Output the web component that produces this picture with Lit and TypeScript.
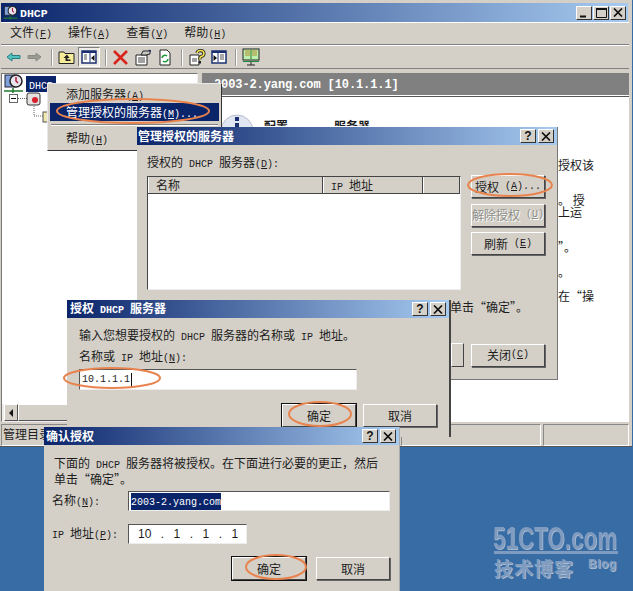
import { LitElement, html, css, svg } from "lit";
import { customElement } from "lit/decorators.js";

function t(s: string) {
  const parts = s.split(/(_.|[\x20-\x7e]+)/).filter(Boolean);
  return parts.map((p) => {
    const m = p.match(/^([\x20-\x7e]*)$/);
    if (!m) return p;
    const segs = p.split(/(_.)/).filter(Boolean);
    return html`<span class="l">${segs.map((q) => (q[0] === "_" && q.length === 2 ? html`<u>${q[1]}</u>` : q))}</span>`;
  });
}

const capBtn = (k: string) => html`<span class="cap">${k === "?"
  ? html`<b class="q">?</b>`
  : k === "x"
    ? html`<svg width="10" height="9" viewBox="0 0 10 9"><path d="M1 0.5 9 8.5M9 0.5 1 8.5" stroke="#111" stroke-width="1.7" fill="none"/></svg>`
    : k === "max"
      ? html`<svg width="11" height="10" viewBox="0 0 11 10"><path d="M.5 1.5h10v8H.5z" stroke="#111" fill="none" stroke-width="1"/><path d="M0 1h11" stroke="#111" stroke-width="2"/></svg>`
      : html`<svg width="10" height="10" viewBox="0 0 10 10"><path d="M1 8.5h6" stroke="#111" stroke-width="2"/></svg>`}</span>`;

const tool = (body: unknown, cls = "") => html`<span class="tool ${cls}"><svg width="20" height="18" viewBox="0 0 20 18">${body}</svg></span>`;

const back = svg`<path d="M4 9 9 5v2.500h8v3H9V13z" fill="#4fc3c0" stroke="#2a7d80"/>`;
const fwd = svg`<path d="M16 9 11 5v2.500H3v3h8V13z" fill="#9a9a92" stroke="#8a8a84"/>`;
const up = svg`<path d="M2 4h5l1 1.500h9v10H2z" fill="#f7ec9a" stroke="#222"/><path d="M10 6.500 6.500 10h2v3h5v-1.500h-3V10h2z" fill="#222"/>`;
const split = svg`<rect x="3" y="3" width="14" height="12" fill="#fff" stroke="#1a2f70" stroke-width="1.500"/><rect x="3" y="3" width="14" height="2" fill="#1a2f70"/><path d="M11 4v10" stroke="#1a2f70"/><path d="M5 7h3M5 9h3M5 11h3" stroke="#555"/><path d="M15.500 7v6L12 10z" fill="#111"/>`;
const splitR = svg`<rect x="3" y="3" width="14" height="12" fill="#fff" stroke="#1a2f70" stroke-width="1.500"/><rect x="3" y="3" width="14" height="2" fill="#1a2f70"/><path d="M9 4v10" stroke="#1a2f70"/><path d="M11 7h4M11 9h4M11 11h4" stroke="#555"/><path d="M4.500 7v6L8 10z" fill="#111"/>`;
const del = svg`<path d="M3 3 16 16M16 3 3 16" stroke="#d9241c" stroke-width="2.600"/>`;
const props = svg`<path d="M3 7h11v10H3z" fill="#fff" stroke="#222"/><path d="M5 10h7M5 12h7M5 14h7" stroke="#444"/><path d="M8 7 10 3h5l2-1v4l-4 1z" fill="#c8c8c8" stroke="#222"/><path d="M15 3l3-1v2z" fill="#1a2f70"/>`;
const refresh = svg`<path d="M5 2h7l3 3v12H5z" fill="#fff" stroke="#222"/><path d="M7 10a3 3 0 0 1 5-2M13 11a3 3 0 0 1-5 2" stroke="#1c9a3c" stroke-width="1.600" fill="none"/>`;
const help = svg`<path d="M3 7h9v10H3z" fill="#fff" stroke="#222"/><path d="M5 11h5M5 13h5" stroke="#444"/><path d="M10 5a3.500 3 0 1 1 4 3.500c-1 .5-1.200 1-1.200 3" stroke="#222" stroke-width="3.200" fill="none"/><path d="M10 5a3.500 3 0 1 1 4 3.500c-1 .5-1.200 1-1.200 3" stroke="#f2e64a" stroke-width="1.500" fill="none"/><rect x="11.500" y="13" width="2.500" height="2.500" fill="#222"/>`;
const monitor = svg`<rect x="2" y="1" width="16" height="11" fill="#bdf0b0" stroke="#222"/><path d="M4 3h5M4 5h5M4 7h5M11 3h5M11 5h5M11 7h5" stroke="#b08a2a"/><path d="M10 2v9" stroke="#2d7a2d"/><path d="M2 13h16v1H2z" fill="#1f8a3c"/><path d="M10 14v3M6 17h8" stroke="#222"/>`;

const dhcpIcon = (w: number, h: number) => html`<svg width=${w} height=${h} viewBox="0 0 22 20"><rect x="2" y="1" width="10" height="12" fill="#7fa0d8" stroke="#223" /><circle cx="13" cy="7" r="6" fill="#e8e4ee" stroke="#222" stroke-width="1.500"/><path d="M13 3v4l2 2" stroke="#b01a3a" stroke-width="1.500" fill="none"/><path d="M1 17h19M10 14v5" stroke="#1e7a2e" stroke-width="1.500"/></svg>`;

@customElement("app-root")
export class AppRoot extends LitElement {
  static styles = css`
    :host { display: block; width: 633px; height: 591px; position: relative; overflow: hidden; background: #376ca5;
      font: 12px/14px "Noto Sans CJK SC", sans-serif; color: #1c1c1c; }
    .l { font-family: "Liberation Mono", monospace; font-size: 10px; }
    u { text-underline-offset: 1px; }
    .main { position: absolute; left: 0; top: 0; width: 632px; height: 447px; background: #d4d0c8; box-sizing: border-box;
      padding: 3px 3px 0 1px; display: flex; flex-direction: column; border-bottom: 1px solid #555; }
    .titlebar { display: flex; align-items: center; flex: none; background: linear-gradient(90deg, #0a246a, #a6caf0); color: #fff; font-weight: 700; }
    .titlebar .l { font-weight: 700; }
    .titlebar .txt { flex: 1; white-space: nowrap; overflow: hidden; }
    .main > .titlebar { height: 19px; padding: 0 2px; margin-right: 1px; }
    .main > .titlebar .txt { margin-left: 1px; }
    .main > .titlebar .txt .l { font-size: 11.500px; }
    .caps { display: flex; gap: 2px; }
    .main .caps { gap: 1px; }
    .cap { width: 16px; height: 14px; box-sizing: border-box; background: #d4d0c8; display: flex; align-items: center; justify-content: center;
      border: 1px solid; border-color: #fff #333 #333 #fff; }
    .q { font: 700 12px/12px "Liberation Sans", sans-serif; color: #111; }
    .menubar { height: 23px; flex: none; display: flex; align-items: center; gap: 16px; padding-left: 9px; box-sizing: border-box;
      border-top: 1px solid #fff; border-bottom: 1px solid #808080; }
    .toolbar { height: 24px; flex: none; display: flex; align-items: center; padding-left: 1px; box-sizing: border-box;
      border-top: 1px solid #fff; border-bottom: 1px solid #808080; }
    .tool { width: 22px; height: 20px; display: flex; align-items: center; justify-content: center; }
    .tool.pressed { background: #ecebe6; border: 1px solid; border-color: #808080 #fff #fff #808080; box-sizing: border-box; }
    .tsep { width: 2px; height: 17px; margin: 0 3px 0 5px; border-left: 1px solid #999; border-right: 1px solid #fff; box-sizing: border-box; }
    .work { flex: 1; display: flex; flex-direction: column; min-height: 0; }
    .panes { flex: 1; display: flex; gap: 4px; margin-top: 4px; min-height: 0; }
    .left { width: 197px; flex: none; background: #fff; border: 1px solid; border-color: #777 #eee #eee #777; box-sizing: border-box; position: relative; display: flex; flex-direction: column; }
    .right { flex: 1; display: flex; flex-direction: column; min-width: 0; position: relative; }
    .rhead { height: 23px; flex: none; background: #808080; color: #fff; font: 700 12px/25px "Liberation Mono", monospace; letter-spacing: -.1px; padding-left: 12px; box-sizing: border-box; white-space: pre; border-bottom: 1px solid #fff; }
    .rbody { flex: 1; background: #fff; border-top: 1px solid #555; position: relative; }
    .frag { position: absolute; white-space: pre; }
    .clip { height: 7px; overflow: hidden; font-weight: 700; }
    .treerow { display: flex; align-items: center; height: 20px; }
    .sel { background: #0a246a; color: #fff; padding: 0 3px; margin-left: 1px; height: 16px; line-height: 16px; }
    .hscroll { height: 17px; flex: none; margin-top: 2px; background: #eeede8; display: flex; border-top: 1px solid #fff; margin-right: 6px; }
    .sbtn { width: 14px; background: #d4d0c8; border: 1px solid; border-color: #fff #555 #555 #fff; box-sizing: border-box; display: flex; align-items: center; justify-content: center; margin-left: 2px; }
    .sthumb { width: 170px; background: #d4d0c8; border: 1px solid; border-color: #fff #555 #555 #fff; box-sizing: border-box; }
    .status { height: 22px; flex: none; display: flex; gap: 2px; margin-top: 2px; }
    .status div { border: 1px solid; border-color: #888 #fff #fff #888; box-sizing: border-box; padding-left: 1px; line-height: 17px; white-space: nowrap; overflow: hidden; }
    .menu { position: absolute; left: 47px; top: 83px; width: 175px; height: 68px; background: #d4d0c8; box-sizing: border-box; border: 1px solid; border-color: #e8e8e8 #333 #333 #e8e8e8; padding: 1px 2px; }
    .mi { height: 18px; line-height: 18px; padding-left: 16px; white-space: pre; }
    .mi.on { background: #0a246a; color: #fff; }
    .msep { height: 2px; margin: 3px 1px; background: #808080; border-bottom: 1px solid #fff; box-sizing: border-box; }
    .dlg { position: absolute; background: #d4d0c8; box-sizing: border-box; }
    .dlg > .titlebar { height: 18px; padding: 0 3px 0 1px; }
    .d1 { left: 137px; top: 127px; width: 421px; height: 253px; border-right: 1px solid #777; border-bottom: 1px solid #777; }
    .d2 { left: 67px; top: 300px; width: 384px; height: 137px; border-right: 2px solid #444; }
    .d2 > .titlebar { padding-left: 3px; }
    .d3 { left: 44px; top: 427px; width: 356px; height: 164px; border-right: 1px solid #aaa; }
    .d3 > .titlebar { padding-left: 2px; }
    .d1 .body { display: flex; padding: 0 12px 0 10px; }
    .d1 .lcol { width: 314px; margin-right: 10px; }
    .d1 .lbl { margin-top: 10px; height: 14px; }
    .list { margin-top: 7px; height: 114px; background: #fff; border: 1px solid; border-color: #444 #eee #eee #444; box-sizing: border-box; display: flex; flex-direction: column; }
    .lhead { height: 16px; display: flex; background: #d4d0c8; border-bottom: 1px solid #444; }
    .lhead div { border-right: 1px solid #444; box-sizing: border-box; padding-left: 7px; border-left: 1px solid #fff; line-height: 15px; }
    .rcol { width: 74px; padding-top: 30px; display: flex; flex-direction: column; gap: 5.500px; }
    .btn { width: 74px; height: 23px; box-sizing: border-box; background: #d4d0c8; border: 1px solid; border-color: #fff #444 #444 #fff; box-shadow: 1px 1px 0 #666; display: flex; align-items: center; justify-content: center; white-space: pre; flex: none; }
    .btn.def { outline: 1px solid #111; }
    .btn.dis { color: #8f8f8a; text-shadow: 1px 1px 0 #fff; }
    .d1 .close { margin-top: 83px; }
    .d1 .peek { position: absolute; left: 314px; top: 216px; width: 11px; height: 22px; background: #d4d0c8; border: 1px solid; border-color: #fff #444 #444 #fff; }
    .d1 .note { position: absolute; left: 313px; top: 173px; white-space: pre; }
    .d2 .pad { padding: 0 12px; }
    .d2 .p1 { margin-top: 10px; height: 14px; }
    .d2 .p2 { margin-top: 7px; height: 14px; }
    .inp { background: #fff; border: 1px solid; border-color: #555 #eee #eee #555; box-sizing: border-box; height: 21px; display: flex; align-items: center; padding-left: 2px; white-space: pre; }
    .d2 .inp { width: 278px; margin-top: 6px; }
    .caret { width: 1px; height: 14px; background: #111; margin-left: 1px; }
    .row { display: flex; justify-content: flex-end; }
    .d2 .row { gap: 7px; margin-top: 14px; }
    .d3 .msg { padding: 11px 10px 0 10px; line-height: 13px; height: 26px; white-space: pre; }
    .d3 .f { display: flex; align-items: center; padding-left: 8px; }
    .d3 .f .k { width: 76px; white-space: pre; }
    .d3 .f1 { margin-top: 9px; }
    .d3 .f2 { margin-top: 13px; }
    .d3 .inp.w1 { width: 262px; height: 20px; }
    .d3 .inp.w2 { width: 119px; height: 20px; padding-left: 9px; font: 12px "Liberation Sans", sans-serif; word-spacing: 1.400px; }
    .hl { background: #0a246a; color: #fff; }
    .d3 .row { margin-top: 13px; gap: 10px; padding-right: 9px; }
    .overlay { position: absolute; inset: 0; pointer-events: none; }
    .wm { position: absolute; color: #7f9bbf; font-weight: 700; white-space: pre; text-shadow: 1px 1px 0 #a9b9cd; }
    .wm1 { left: 493px; top: 522px; font: 700 32px/32px "Liberation Sans", sans-serif; transform: scaleX(.7); transform-origin: left; }
    .wmline { position: absolute; left: 494px; top: 551px; width: 124px; height: 3px; background: #7f9bbf; }
    .wm2 { left: 494px; top: 556px; font-size: 19px; line-height: 24px; letter-spacing: 1px; }
    .wm3 { left: 588px; top: 556px; font: 700 12px/16px "Liberation Sans", sans-serif; letter-spacing: .5px; }
  `;

  render() {
    return html`
      <div class="main">
        <div class="titlebar">
          ${dhcpIcon(16, 16)}
          <span class="txt">${t("DHCP")}</span>
          <span class="caps">${capBtn("min")}${capBtn("max")}${capBtn("x")}</span>
        </div>
        <div class="menubar">
          <span>文件${t("(_F)")}</span><span>操作${t("(_A)")}</span><span>查看${t("(_V)")}</span><span>帮助${t("(_H)")}</span>
        </div>
        <div class="toolbar">
          ${tool(back)}${tool(fwd)}<span class="tsep"></span>${tool(up)}${tool(split, "pressed")}<span class="tsep"></span>
          ${tool(del)}${tool(props)}${tool(refresh)}<span class="tsep"></span>${tool(help)}${tool(splitR)}<span class="tsep"></span>${tool(monitor)}
        </div>
        <div class="work">
          <div class="panes">
            <div class="left">
              <div class="treerow" style="padding-left:1px">${dhcpIcon(22, 20)}<span class="sel">${t("DHCP")}</span></div>
              <div class="treerow" style="padding-left:7px">
                <svg width="40" height="34" viewBox="0 0 40 34" style="margin-top:10px">
                  <rect x=".5" y="2.500" width="8" height="8" fill="#fff" stroke="#666"/><path d="M2 6.500h5" stroke="#111"/>
                  <path d="M9 6.500h9M25 14v10h12" stroke="#666" stroke-dasharray="1 1" fill="none"/>
                  <rect x="18" y="1" width="13" height="12" rx="2" fill="#e4e0e0" stroke="#333"/><circle cx="26" cy="8" r="3" fill="#d8202c"/>
                  <rect x="34" y="20" width="6" height="10" fill="#efe6b0" stroke="#555"/>
                </svg>
              </div>
              <div style="flex:1"></div>
              <div class="hscroll"><span class="sbtn"><svg width="5" height="8"><path d="M4 0v8L0 4z" fill="#111"/></svg></span><span class="sthumb"></span></div>
            </div>
            <div class="right">
              <div class="rhead">2003-2.yang.com [10.1.1.1]</div>
              <div class="rbody">
                <svg class="frag" style="left:18px;top:17px" width="34" height="16" viewBox="0 0 34 16"><circle cx="17" cy="17" r="16" fill="#dfe6f2" stroke="#bbc"/><rect x="15" y="3" width="4" height="4" fill="#1a2f70"/><rect x="15" y="9" width="4" height="7" fill="#1a2f70"/></svg>
                <span class="frag clip" style="left:62px;top:22px">配置</span>
                <span class="frag clip" style="left:132px;top:22px">服务器</span>
                <span class="frag" style="left:356px;top:61px">授权该</span>
                <span class="frag" style="left:356px;top:96px">。 授</span>
                <span class="frag" style="left:356px;top:108px">上运</span>
                <span class="frag" style="left:356px;top:143px">”。</span>
                <span class="frag" style="left:356px;top:168px">。</span>
                <span class="frag" style="left:356px;top:192px">在“操</span>
              </div>
            </div>
          </div>
          <div class="status">
            <div style="width:398px">管理目录</div><div style="width:140px"></div><div style="flex:1"></div>
          </div>
        </div>
      </div>

      <div class="menu">
        <div class="mi">添加服务器${t("(_A)")}</div>
        <div class="mi on">管理授权的服务器${t("(_M)...")}</div>
        <div class="msep"></div>
        <div class="mi">帮助${t("(_H)")}</div>
      </div>

      <div class="dlg d1">
        <div class="titlebar"><span class="txt">管理授权的服务器</span><span class="caps">${capBtn("?")}${capBtn("x")}</span></div>
        <div class="body">
          <div class="lcol">
            <div class="lbl">授权的${t(" DHCP ")}服务器${t("(_D):")}</div>
            <div class="list">
              <div class="lhead"><div style="width:175px">名称</div><div style="width:100px">${t("IP ")}地址</div><div style="flex:1"></div></div>
            </div>
          </div>
          <div class="rcol">
            <div class="btn">授权${t(" (_A)...")}</div>
            <div class="btn dis">解除授权${t(" (_U)")}</div>
            <div class="btn">刷新${t(" (_E)")}</div>
            <div class="btn close">关闭${t("(_C)")}</div>
          </div>
        </div>
        <div class="note">单击“确定”。</div>
        <div class="peek"></div>
      </div>

      <div class="dlg d2">
        <div class="titlebar"><span class="txt">授权${t(" DHCP ")}服务器</span><span class="caps">${capBtn("?")}${capBtn("x")}</span></div>
        <div class="pad">
          <div class="p1">输入您想要授权的${t(" DHCP ")}服务器的名称或${t(" IP ")}地址。</div>
          <div class="p2">名称或${t(" IP ")}地址${t("(_N):")}</div>
          <div class="inp">${t("10.1.1.1")}<span class="caret"></span></div>
          <div class="row"><div class="btn def">确定</div><div class="btn">取消</div></div>
        </div>
      </div>

      <div class="dlg d3">
        <div class="titlebar"><span class="txt">确认授权</span><span class="caps">${capBtn("?")}${capBtn("x")}</span></div>
        <div class="msg">下面的${t(" DHCP ")}服务器将被授权。在下面进行必要的更正，然后
单击“确定”。</div>
        <div class="f f1"><span class="k">名称${t("(_N):")}</span><div class="inp w1"><span class="hl">${t("2003-2.yang.com")}</span></div></div>
        <div class="f f2"><span class="k">${t("IP ")}地址${t("(_P):")}</span><div class="inp w2">10  .  1  .  1  .  1</div></div>
        <div class="row"><div class="btn def">确定</div><div class="btn">取消</div></div>
      </div>

      <svg class="overlay" width="633" height="591" viewBox="0 0 633 591" fill="none" stroke="#e8834e" stroke-width="2">
        <ellipse cx="133" cy="111" rx="76" ry="12"/>
        <ellipse cx="510" cy="185" rx="42" ry="11"/>
        <ellipse cx="112" cy="378" rx="48" ry="10"/>
        <ellipse cx="320" cy="414" rx="31" ry="12"/>
        <ellipse cx="276" cy="567" rx="30" ry="12"/>
      </svg>
      <span class="wm wm1">51CTO.com</span>
      <span class="wmline"></span>
      <span class="wm wm2">技术博客</span>
      <span class="wm wm3">Blog</span>
    `;
  }
}
